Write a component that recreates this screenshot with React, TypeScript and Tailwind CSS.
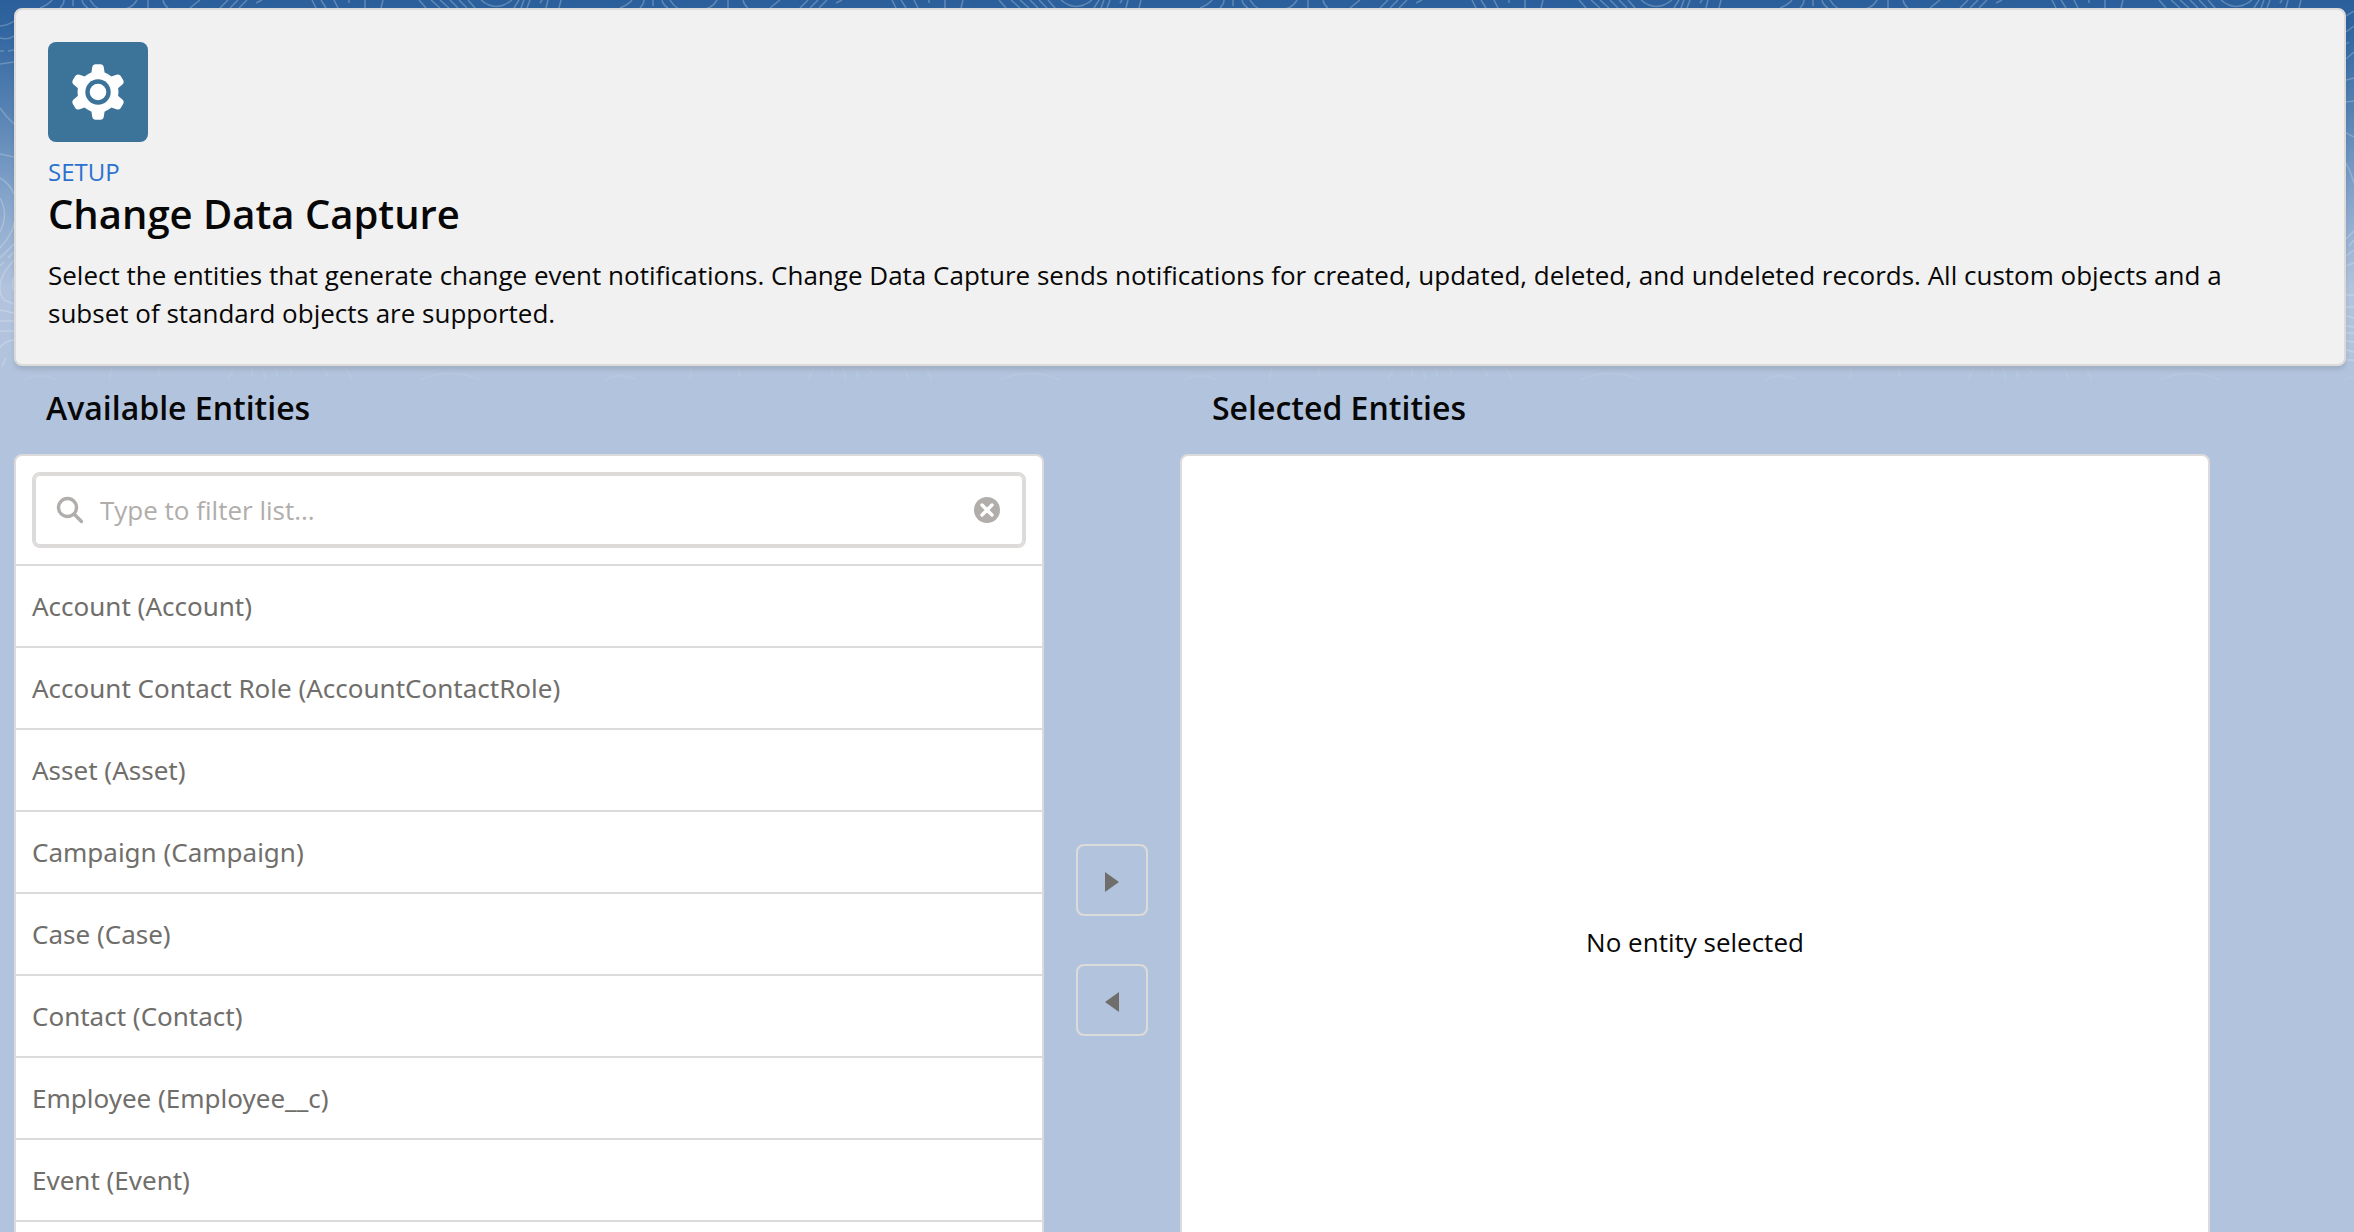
import { useState } from 'react';

const entities = [
  'Account (Account)',
  'Account Contact Role (AccountContactRole)',
  'Asset (Asset)',
  'Campaign (Campaign)',
  'Case (Case)',
  'Contact (Contact)',
  'Employee (Employee__c)',
  'Event (Event)',
];

const contourTile = [
  'M52 0Q48 5 40 8', 'M64 0Q64 4 60 8', 'M73 0V6', 'M82 0Q83 5 88 8', 'M90 0Q98 14 115 11Q132 10 137 0',
  'M148 0V8', 'M163 0Q164 5 168 8', 'M200 0L190 8', 'M228 0L220 8', 'M238 0L230 8', 'M247 0L239 8', 'M262 0L256 3',
  'M312 0L316 8', 'M321 0L326 8', 'M334 0L338 8', 'M349 0V3', 'M365 0V8', 'M383 0L381 8', 'M419 0L426 8',
  'M431 0L440 8', 'M440 0L449 8', 'M450 0L458 8', 'M459 0L467 8', 'M468 0L475 8', 'M481 0Q496 13 512 0', 'M519 0L514 8',
  'M524 0L521 8', 'M530 0L527 8', 'M542 0L540 3', 'M548 0L546 8', 'M561 0L559 8',
];

const lowerTile = [
  'M25 380Q38 372 55 379', 'M112 366L109 380', 'M158 366L160 376', 'M234 366L228 380', 'M252 366V376', 'M262 366L266 380',
  'M275 366L278 378', 'M288 366L292 374', 'M324 366L328 378', 'M345 366L352 380', 'M420 380Q450 366 480 380',
];

const leftEdge = [
  'M0 26Q8 25 14 21', 'M0 38Q8 40 14 36', 'M0 51H4M8 51L14 50', 'M0 64L14 62', 'M0 108Q6 117 14 124', 'M0 154L14 157',
  'M0 178Q10 184 14 194', 'M0 198Q9 214 0 232', 'M14 222Q14 232 0 248', 'M14 244L0 258', 'M14 252L8 258M4 262L0 266',
  'M14 260Q-8 284 4 300L14 304', 'M14 277Q11 284 14 290', 'M0 310L14 313', 'M0 321H14', 'M0 331H14', 'M14 340Q4 341 0 348', 'M6 358L2 366',
];

const rightEdge = [
  'M0 16L8 11', 'M0 32L8 26', 'M0 44L3 42', 'M0 59L8 52', 'M0 80L8 78', 'M0 102L8 101', 'M0 133L8 137', 'M0 163Q4 170 8 183',
  'M0 239L8 231', 'M3 246L8 240', 'M0 256L8 250', 'M0 266L8 263', 'M0 295H8', 'M0 307H8', 'M0 316L8 318', 'M0 326L8 327',
  'M0 333H8', 'M0 341L8 342', 'M0 350L8 352', 'M0 360H8',
];

function Strokes({ paths }: { paths: string[] }) {
  return <>{paths.map((d) => <path key={d} d={d} />)}</>;
}

function Backdrop() {
  return (
    <div
      aria-hidden="true"
      className="absolute inset-x-0 top-0 -z-10 h-[400px] bg-[linear-gradient(180deg,#2a5f9b_0px,#2f649f_24px,#5b86b6_120px,#86a5cb_200px,#b2c4dd_290px,#b2c4dd_400px)]"
    >
      <svg className="absolute inset-0 h-full w-full" fill="none" stroke="#fff" strokeWidth="1.5">
        <defs>
          <pattern id="contours" width="580" height="400" patternUnits="userSpaceOnUse">
            <g strokeOpacity="0.25"><Strokes paths={contourTile} /></g>
            <g strokeOpacity="0.06"><Strokes paths={lowerTile} /></g>
          </pattern>
        </defs>
        <rect width="100%" height="100%" fill="url(#contours)" stroke="none" />
      </svg>
      <svg className="absolute left-0 top-0" width="14" height="400" fill="none" stroke="#fff" strokeWidth="1.5" strokeOpacity="0.22">
        <Strokes paths={leftEdge} />
      </svg>
      <svg className="absolute right-0 top-0" width="8" height="400" fill="none" stroke="#fff" strokeWidth="1.5" strokeOpacity="0.22">
        <Strokes paths={rightEdge} />
      </svg>
    </div>
  );
}

function GearIcon() {
  return (
    <svg viewBox="0 0 100 100" className="size-[100px] rounded-lg bg-[#3c7399]" aria-hidden="true">
      <g transform="translate(50 50)" fill="#fff">
        <circle r="20.5" />
        {[0, 60, 120, 180, 240, 300].map((a) => (
          <path
            key={a}
            transform={`rotate(${a})`}
            d="M-11 -16Q-7 -17 -6.5 -20L-5.8 -24.5Q-5.2 -27.7 -2.5 -27.7H2.5Q5.2 -27.7 5.8 -24.5L6.5 -20Q7 -17 11 -16Z"
          />
        ))}
        <circle r="12.7" fill="#3c7399" />
        <circle r="8.3" />
      </g>
    </svg>
  );
}

function MoveButton({ label, d }: { label: string; d: string }) {
  return (
    <button type="button" aria-label={label} className="flex size-[72px] items-center justify-center rounded-lg border-2 border-[#dddbda] pt-1">
      <svg viewBox="0 0 14 20" className="h-5 w-3.5" fill="#706e6b" aria-hidden="true">
        <path d={d} />
      </svg>
    </button>
  );
}

export default function App() {
  const [filter, setFilter] = useState('');
  return (
    <main className="relative isolate h-screen overflow-hidden bg-[#b2c4dd] pl-3.5 pr-2 pt-2 font-['Open_Sans',sans-serif] text-[26px] leading-[38px] text-[#080707]">
      <Backdrop />
      <header className="rounded-lg border-2 border-[#dddbda] bg-[#f1f1f1] px-8 py-8 shadow-[0_4px_4px_rgba(0,0,0,0.1)]">
        <GearIcon />
        <p className="mt-3.5 text-2xl leading-8 text-[#2a71cf]">SETUP</p>
        <h1 className="text-[40px] font-semibold leading-[52px]">Change Data Capture</h1>
        <p className="mt-4 pr-20">
          Select the entities that generate change event notifications. Change Data Capture sends notifications for
          created, updated, deleted, and undeleted records. All custom objects and a subset of standard objects are
          supported.
        </p>
      </header>

      <div className="flex pr-[136px] pt-[18px]">
        <section className="flex-1" aria-labelledby="available">
          <h2 id="available" className="mb-[22px] pl-8 text-[32px] font-semibold leading-[48px]">Available Entities</h2>
          <div className="h-[976px] overflow-hidden rounded-lg border-2 border-[#dddbda] bg-white">
            <div className="border-b-2 border-[#dddbda] p-4">
              <div className="flex h-[76px] items-center rounded-lg border-2 border-[#dddbda] pl-[22px] pr-6 shadow-[inset_0_0_0_2px_#dddbda]">
                <svg viewBox="0 0 28 28" className="size-7 shrink-0" fill="none" stroke="#b0adab" strokeWidth="3.4" strokeLinecap="round" aria-hidden="true">
                  <circle cx="11.5" cy="11.5" r="9" />
                  <path d="M18 18L25.5 25.5" />
                </svg>
                <input
                  type="text"
                  aria-label="Filter available entities"
                  placeholder="Type to filter list..."
                  value={filter}
                  onChange={(e) => setFilter(e.target.value)}
                  className="ml-4 min-w-0 flex-1 bg-transparent outline-none placeholder:text-[#b0adab]"
                />
                <button type="button" aria-label="Clear filter" onClick={() => setFilter('')} className="shrink-0">
                  <svg viewBox="0 0 26 26" className="size-[26px]" aria-hidden="true">
                    <circle cx="13" cy="13" r="13" fill="#b0adab" />
                    <path d="M8 8L18 18M18 8L8 18" stroke="#fff" strokeWidth="3.4" strokeLinecap="round" />
                  </svg>
                </button>
              </div>
            </div>
            <ul className="font-['Noto_Sans','Open_Sans',sans-serif] text-[#706e6b]">
              {entities
                .filter((name) => name.toLowerCase().includes(filter.toLowerCase()))
                .map((name) => (
                  <li key={name} className="border-b-2 border-[#dddbda] px-4 py-[21px]">{name}</li>
                ))}
            </ul>
          </div>
        </section>

        <div className="flex w-[136px] flex-col items-center justify-center gap-12 pb-1 pt-[70px]">
          <MoveButton label="Move selection to Selected Entities" d="M0 0L14 10L0 20Z" />
          <MoveButton label="Move selection to Available Entities" d="M14 0L0 10L14 20Z" />
        </div>

        <section className="flex-1" aria-labelledby="selected">
          <h2 id="selected" className="mb-[22px] pl-8 text-[32px] font-semibold leading-[48px]">Selected Entities</h2>
          <div className="flex h-[976px] items-center justify-center rounded-lg border-2 border-[#dddbda] bg-white">
            <p>No entity selected</p>
          </div>
        </section>
      </div>
    </main>
  );
}
